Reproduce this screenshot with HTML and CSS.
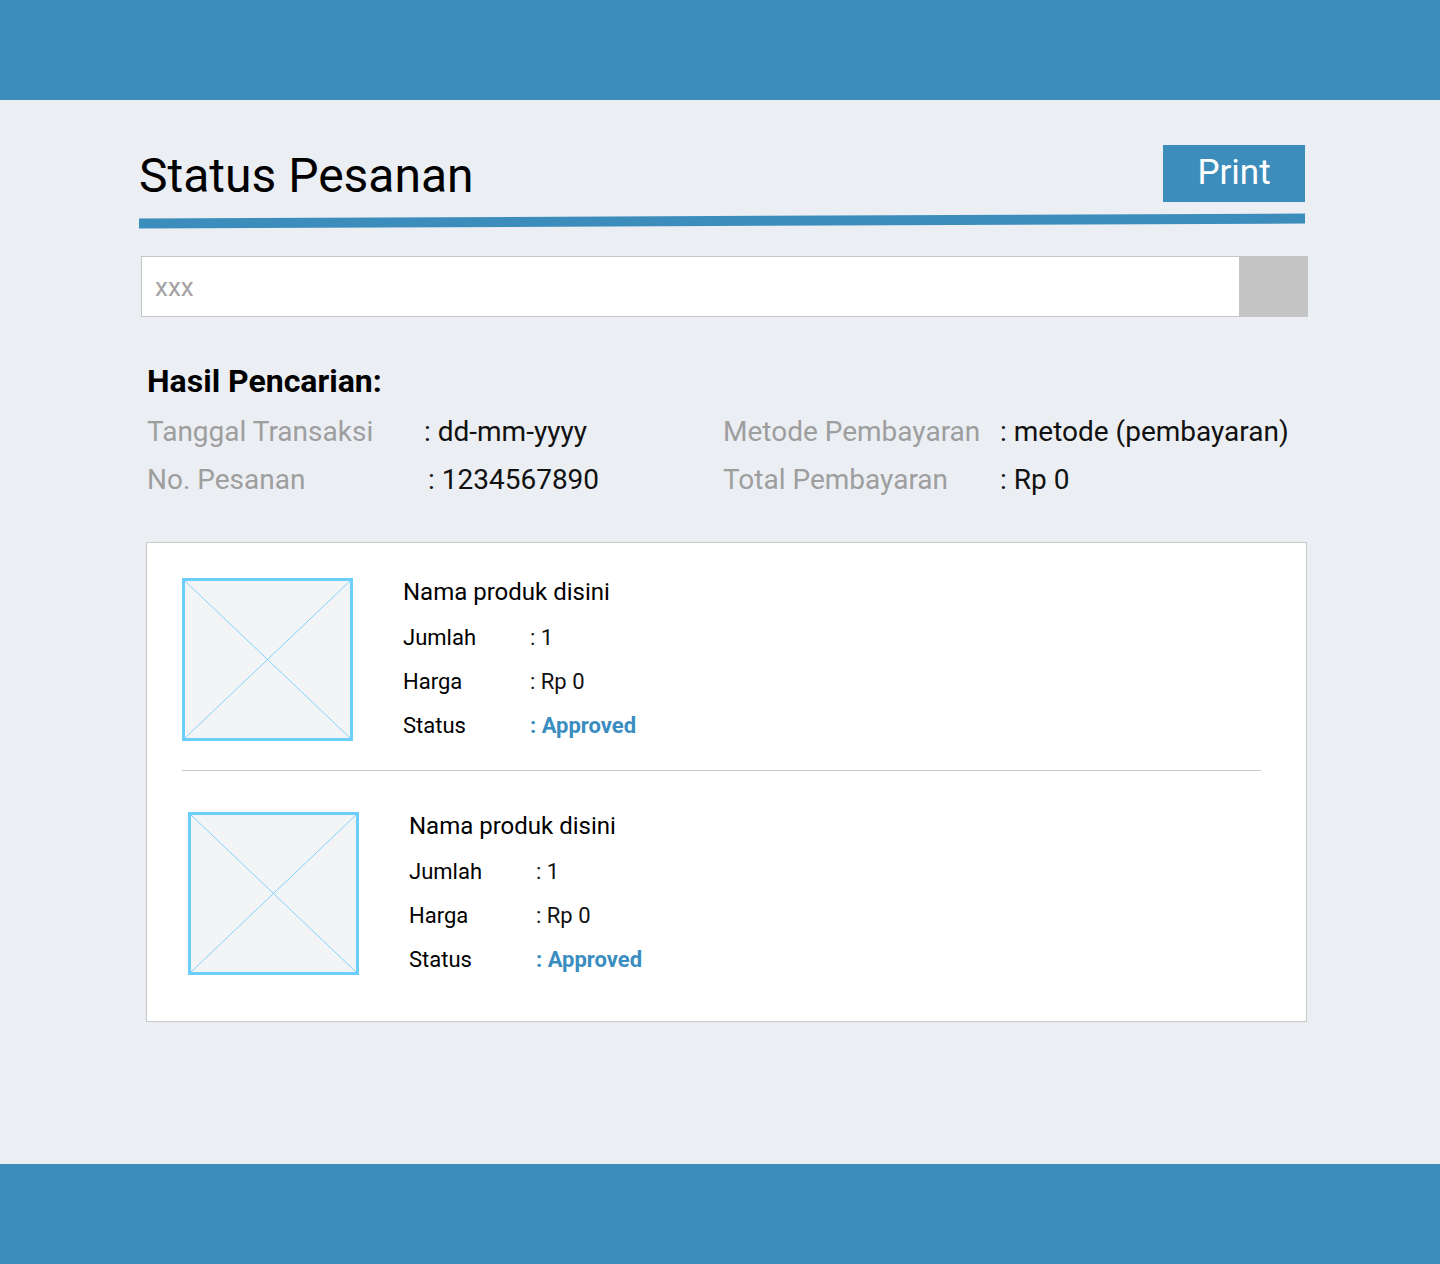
FILE: index.html
```html
<!DOCTYPE html>
<html lang="id">
<head>
<meta charset="utf-8">
<title>Status Pesanan</title>
<link rel="stylesheet" href="styles.css">
</head>
<body>
<header class="topbar"></header>
<main class="page">
  <div class="title-row">
    <h1 class="title">Status Pesanan</h1>
    <button class="print-btn">Print</button>
  </div>
  <div class="rule"></div>
  <div class="search">
    <input class="search-input" type="text" placeholder="xxx">
    <button class="search-btn" aria-label="Cari"></button>
  </div>
  <section class="results">
    <h2 class="results-title">Hasil Pencarian:</h2>
    <div class="info-grid">
      <div class="info-label">Tanggal Transaksi</div>
      <div class="info-value">: dd-mm-yyyy</div>
      <div class="info-label">Metode Pembayaran</div>
      <div class="info-value">: metode (pembayaran)</div>
      <div class="info-label">No. Pesanan</div>
      <div class="info-value nudge">: 1234567890</div>
      <div class="info-label">Total Pembayaran</div>
      <div class="info-value">: Rp 0</div>
    </div>
  </section>
  <div class="card">
    <div class="item item-first">
      <div class="thumb">
        <svg viewBox="0 0 100 100" preserveAspectRatio="none"><line x1="0" y1="0" x2="100" y2="100" vector-effect="non-scaling-stroke"/><line x1="100" y1="0" x2="0" y2="100" vector-effect="non-scaling-stroke"/></svg>
      </div>
      <div class="details">
        <div class="name">Nama produk disini</div>
        <div class="row"><span class="k">Jumlah</span><span class="v">: 1</span></div>
        <div class="row"><span class="k">Harga</span><span class="v">: Rp 0</span></div>
        <div class="row"><span class="k">Status</span><span class="v status">: Approved</span></div>
      </div>
    </div>
    <div class="divider"></div>
    <div class="item item-second">
      <div class="thumb">
        <svg viewBox="0 0 100 100" preserveAspectRatio="none"><line x1="0" y1="0" x2="100" y2="100" vector-effect="non-scaling-stroke"/><line x1="100" y1="0" x2="0" y2="100" vector-effect="non-scaling-stroke"/></svg>
      </div>
      <div class="details">
        <div class="name">Nama produk disini</div>
        <div class="row"><span class="k">Jumlah</span><span class="v">: 1</span></div>
        <div class="row"><span class="k">Harga</span><span class="v">: Rp 0</span></div>
        <div class="row"><span class="k">Status</span><span class="v status">: Approved</span></div>
      </div>
    </div>
  </div>
</main>
<footer class="bottombar"></footer>
</body>
</html>
```
FILE: styles.css
```css
* { box-sizing: border-box; }
html, body { margin: 0; padding: 0; }
body {
  background: #ebeef3;
  font-family: Roboto, "Liberation Sans", sans-serif;
  color: #111;
}
.topbar, .bottombar {
  height: 100px;
  background: #3d8dbc;
}
.page {
  height: 1064px;
  padding: 45px 0 0 139px;
}
.title-row {
  width: 1166px;
  display: flex;
  justify-content: space-between;
  align-items: flex-start;
}
.title {
  margin: 5px 0 0 0;
  font-size: 48px;
  line-height: 52px;
  font-weight: 400;
  color: #000;
}
.print-btn {
  width: 142px;
  height: 57px;
  border: 0;
  background: #3d8dbc;
  color: #fff;
  font-family: Roboto, "Liberation Sans", sans-serif;
  font-size: 35px;
  padding: 0 0 2px 0;
}
.rule {
  width: 1166px;
  height: 10px;
  margin-top: 14px;
  background: #3d8dbc;
  transform: rotate(-0.245deg);
}
.search {
  display: flex;
  width: 1167px;
  height: 61px;
  margin: 30px 0 0 2px;
}
.search-input {
  flex: 1;
  height: 61px;
  border: 1px solid #c6c6c6;
  border-right: 0;
  background: #fff;
  padding: 0 0 0 13px;
  font-family: Roboto, "Liberation Sans", sans-serif;
  font-size: 26px;
  outline: none;
}
.search-input::placeholder { color: #a3a3a3; }
.search-btn {
  width: 69px;
  height: 61px;
  border: 0;
  background: #c4c4c4;
}
.results {
  margin: 46px 0 0 8px;
}
.results-title {
  margin: 0;
  font-size: 32px;
  line-height: 36px;
  font-weight: 700;
  color: #000;
}
.info-grid {
  margin-top: 9px;
  display: grid;
  grid-template-columns: 277px 299px 277px auto;
  font-size: 28px;
  line-height: 48px;
}
.info-label { color: #9e9e9e; }
.info-value { color: #111; }
.nudge { padding-left: 4px; }
.card {
  width: 1161px;
  margin: 38px 0 0 7px;
  background: #fff;
  border: 1px solid #c9c9c9;
}
.item {
  display: flex;
  align-items: flex-start;
}
.item-first { padding: 35px 0 22px 35px; }
.item-second { padding: 41px 0 39px 41px; }
.thumb {
  width: 171px;
  height: 163px;
  border: 3px solid #6ccffb;
  background: #f3f4f6;
  flex: none;
}
.thumb svg {
  display: block;
  width: 100%;
  height: 100%;
}
.thumb line {
  stroke: #7fd4fb;
  stroke-width: 1;
}
.details {
  margin-left: 50px;
}
.name {
  font-size: 24px;
  line-height: 28px;
  margin-bottom: 10px;
  color: #000;
}
.row {
  display: flex;
  font-size: 22px;
  line-height: 44px;
}
.k {
  width: 127px;
  color: #000;
}
.v { color: #111; }
.status {
  color: #3a8dc0;
  font-weight: 700;
}
.divider {
  height: 1px;
  background: #cbcbcb;
  margin: 0 45px 0 35px;
}
```
